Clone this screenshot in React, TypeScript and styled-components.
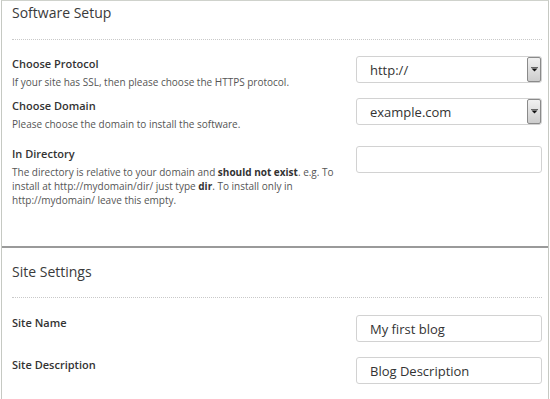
import styled, { createGlobalStyle } from "styled-components";

const Global = createGlobalStyle`
  body {
    margin: 0;
    background: #fff;
    font-family: "Open Sans", "Noto Sans", sans-serif;
  }
`;

const Frame = styled.div`
  width: 548px;
  margin-left: 1px;
  box-sizing: border-box;
  border: 1px solid #c6c9c3;
  border-top-color: #cfd2cc;
  background: #fff;
`;

const Panel = styled.section<{ $bottom: number }>`
  padding: 0 6px ${(p) => p.$bottom}px 10px;
  & + & {
    border-top: 2px solid #9a9a9a;
  }
`;

const Header = styled.h2<{ $top: number; $bottom: number }>`
  margin: 0;
  padding: ${(p) => p.$top}px 0 ${(p) => p.$bottom}px 0;
  font-size: 14px;
  line-height: 22px;
  font-weight: 500;
  color: #3a3a3a;
  border-bottom: 1px dotted #c9c9c9;
`;

const Rows = styled.div<{ $top: number }>`
  padding-top: ${(p) => p.$top}px;
`;

const Row = styled.div<{ $gap?: number }>`
  display: grid;
  grid-template-columns: 1fr 186px;
  column-gap: 10px;
  align-items: start;
  margin-top: ${(p) => p.$gap ?? 0}px;
`;

const Label = styled.div`
  font-size: 11px;
  line-height: 16px;
  font-weight: 600;
  color: #333;
`;

const Desc = styled.p`
  margin: 3px 0 0;
  max-width: 325px;
  font-size: 10px;
  line-height: 14px;
  color: #555;
  b {
    font-weight: 700;
    color: #333;
  }
`;

const Field = styled.div`
  position: relative;
  height: 27px;
  box-sizing: border-box;
  border: 1px solid #d2d2d2;
  border-radius: 3px;
  background: #fff;
  padding-left: 13px;
  display: flex;
  align-items: center;
  font-size: 13px;
  color: #333;
`;

const DropButton = styled.span`
  position: absolute;
  right: 0;
  top: 0;
  bottom: 0;
  width: 14px;
  box-sizing: border-box;
  border: 1px solid #8a8a8a;
  border-radius: 2px;
  background: linear-gradient(#f0f0f0, #cdcdcd);
  display: flex;
  align-items: center;
  justify-content: center;
`;

function Select({ value }: { value: string }) {
  return (
    <Field>
      {value}
      <DropButton>
        <svg width="7" height="5" viewBox="0 0 7 5">
          <rect x="0" y="0" width="7" height="1" fill="#666" />
          <path d="M0.5 1.5 L6.5 1.5 L3.5 4.5 Z" fill="#111" />
        </svg>
      </DropButton>
    </Field>
  );
}

export default function App() {
  return (
    <>
      <Global />
      <Frame>
        <Panel $bottom={39}>
          <Header $top={1} $bottom={15}>
            Software Setup
          </Header>
          <Rows $top={16}>
            <Row>
              <div>
                <Label>Choose Protocol</Label>
                <Desc>If your site has SSL, then please choose the HTTPS protocol.</Desc>
              </div>
              <Select value="http://" />
            </Row>
            <Row $gap={9}>
              <div>
                <Label>Choose Domain</Label>
                <Desc>Please choose the domain to install the software.</Desc>
              </div>
              <Select value="example.com" />
            </Row>
            <Row $gap={15}>
              <div>
                <Label>In Directory</Label>
                <Desc>
                  The directory is relative to your domain and <b>should not exist</b>. e.g. To
                  install at http://mydomain/dir/ just type <b>dir</b>. To install only in
                  http://mydomain/ leave this empty.
                </Desc>
              </div>
              <Field />
            </Row>
          </Rows>
        </Panel>
        <Panel $bottom={15}>
          <Header $top={13} $bottom={14}>
            Site Settings
          </Header>
          <Rows $top={17}>
            <Row>
              <Label>Site Name</Label>
              <Field>My first blog</Field>
            </Row>
            <Row $gap={15}>
              <Label>Site Description</Label>
              <Field>Blog Description</Field>
            </Row>
          </Rows>
        </Panel>
      </Frame>
    </>
  );
}
